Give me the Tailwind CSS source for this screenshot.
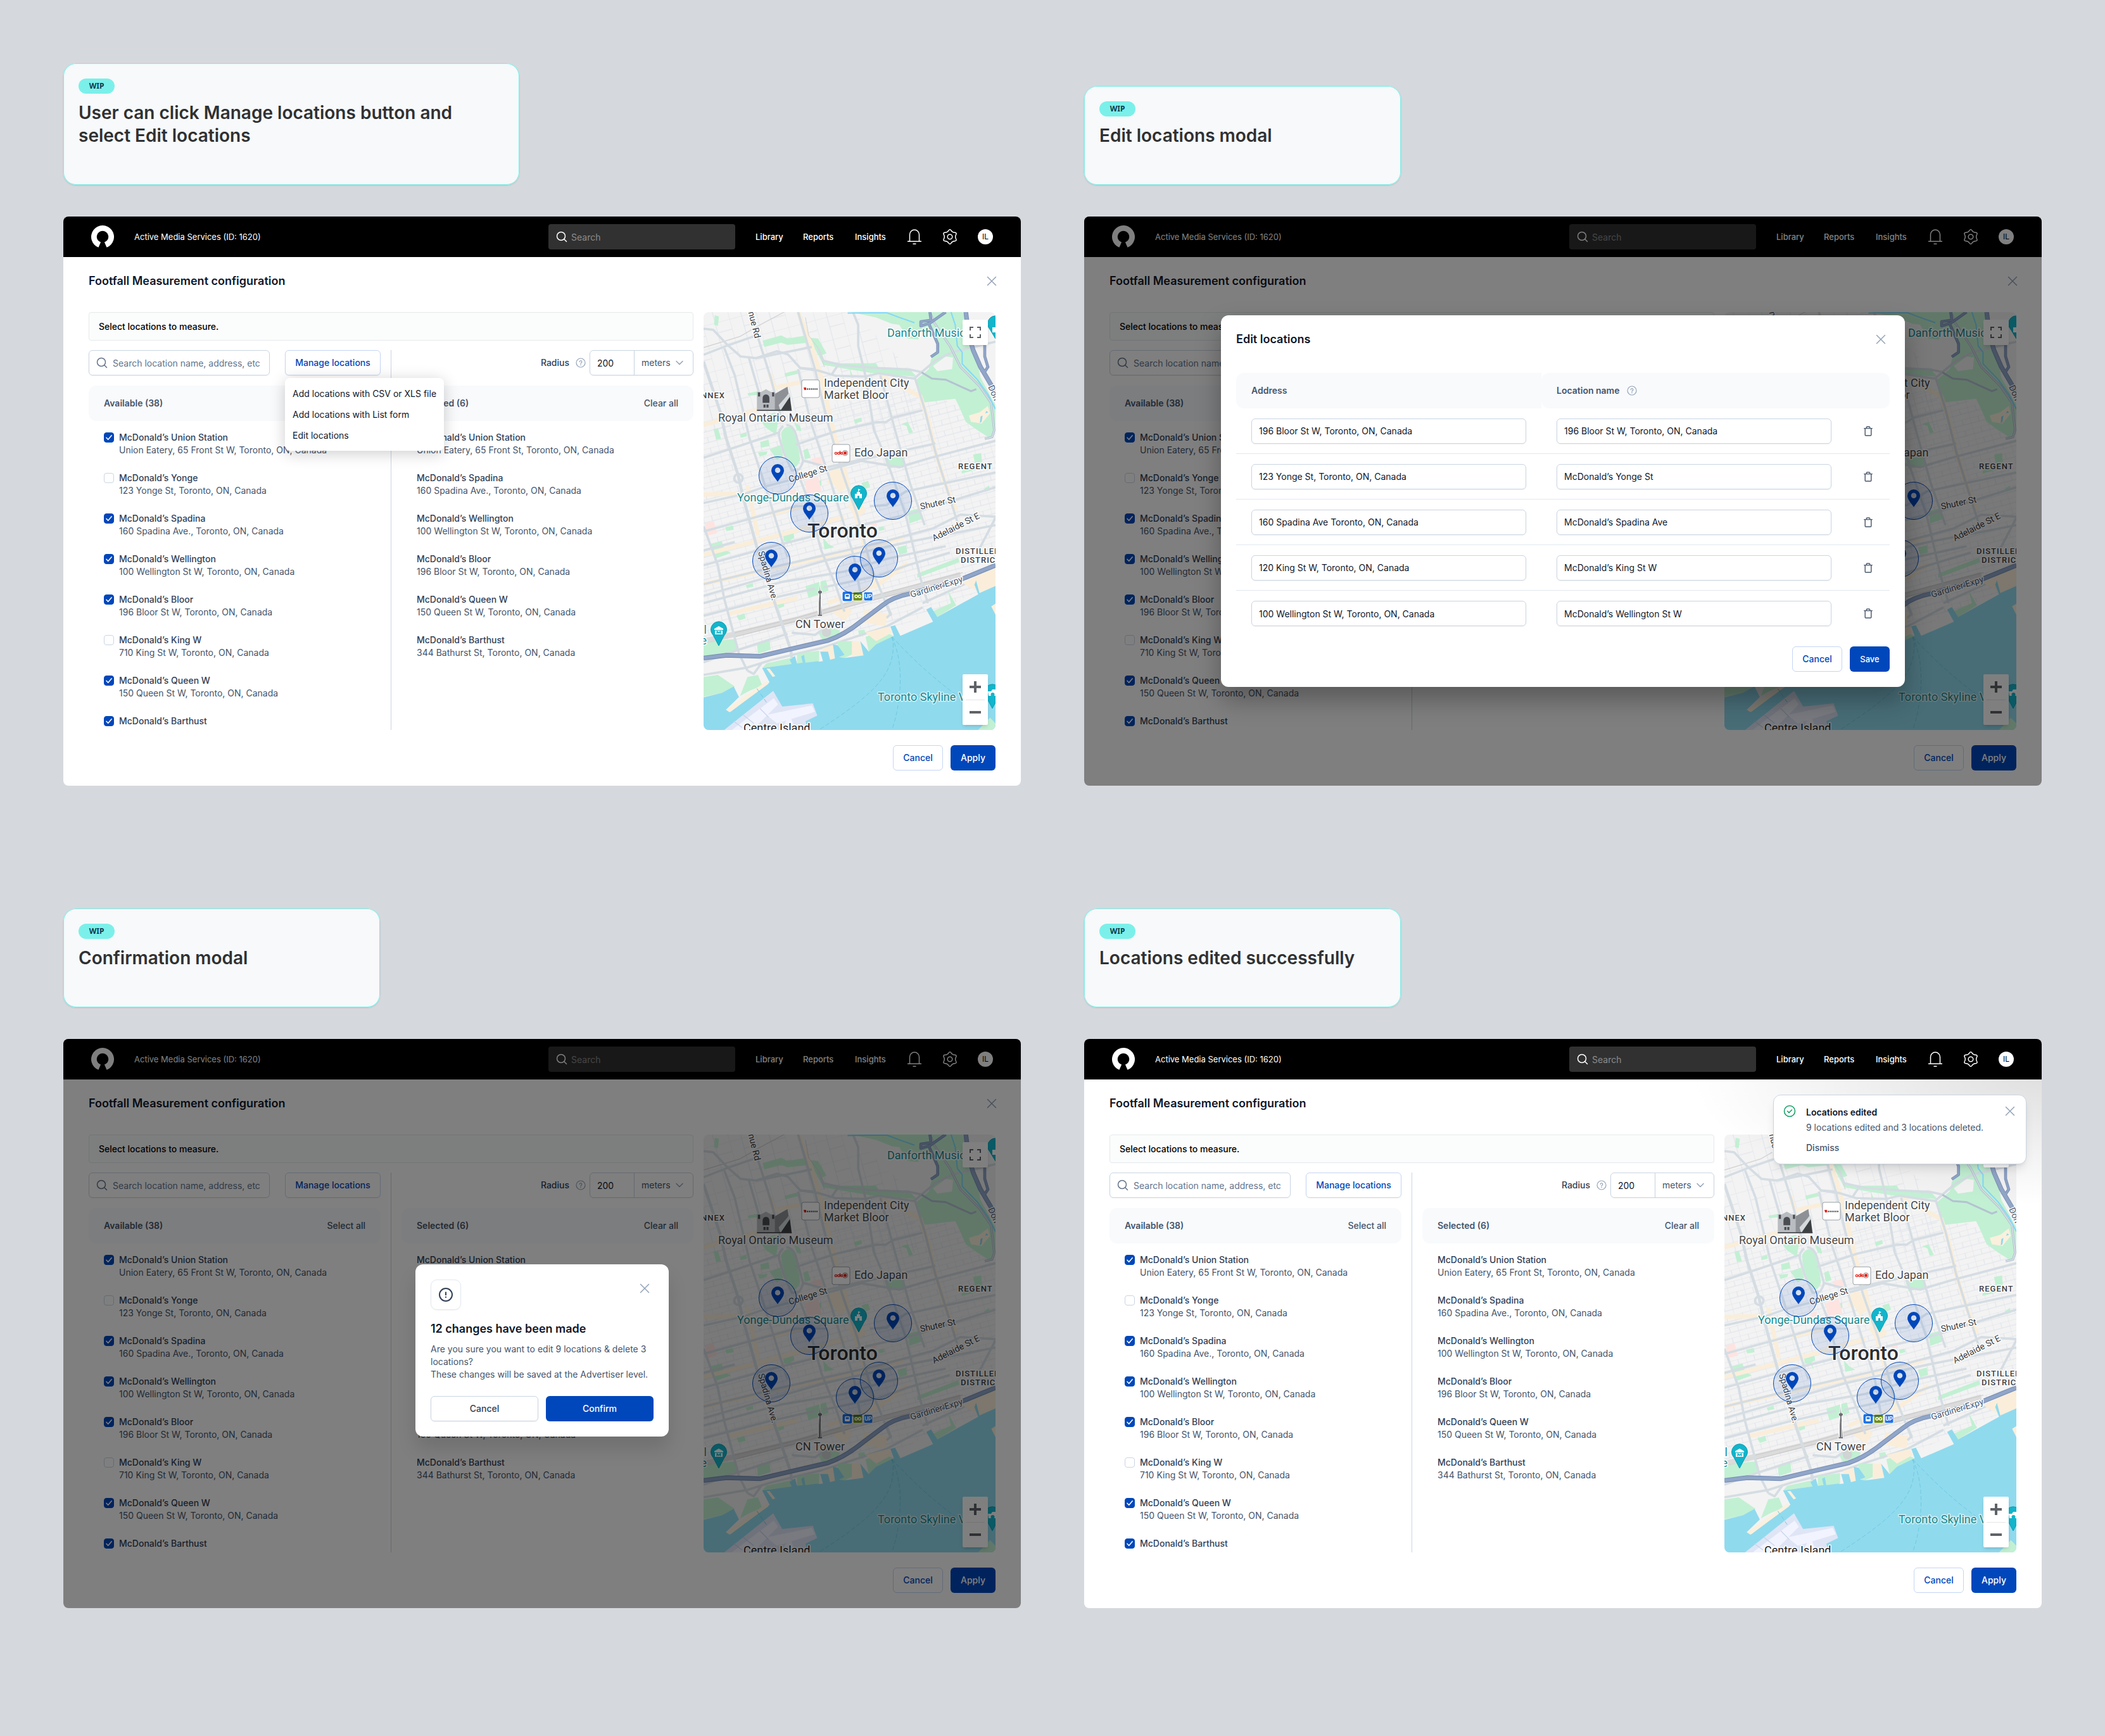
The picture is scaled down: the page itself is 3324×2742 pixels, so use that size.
<!DOCTYPE html>
<html lang="en">
<head>
<meta charset="utf-8">
<title>Footfall Measurement – edit locations flow</title>
<script src="https://cdn.jsdelivr.net/npm/@tailwindcss/browser@4"></script>
</head>
<body class="bg-[#d5d9de] font-['Inter',sans-serif] text-sm leading-5 text-slate-900">
<main id="board" class="grid grid-cols-2 items-end gap-x-[100px] gap-y-[194px] px-[100px] pt-[100px] pb-[200px]"></main>

<!-- Map artwork, shared by every screen -->
<template id="map">
  <div class="relative shrink grow basis-0 overflow-hidden rounded-lg bg-[#f3f3f3]">
    <svg class="absolute inset-0 h-full w-full" viewBox="32 39 1384 1983" preserveAspectRatio="xMidYMid slice" fill="none" aria-hidden="true">
      <defs>
        <pattern id="gridA" width="78" height="52" patternUnits="userSpaceOnUse" patternTransform="rotate(-15)"><path d="M0 0H78M0 0V52M40 0V26M0 26H78" stroke="#dde2ea" stroke-width="3"/></pattern>
        <pattern id="gridB" width="130" height="110" patternUnits="userSpaceOnUse" patternTransform="rotate(-15)"><path d="M0 0H130M0 0V110M60 0V110M60 50H130" stroke="#dde2ea" stroke-width="3"/></pattern>
      </defs>
      <path fill="url(#gridB)" d="M32 39H740L1040 340V600H32Z"/>
      <path fill="url(#gridA)" d="M32 600L1040 400L1416 560V1330L900 1560L32 1700Z"/>
      <g fill="#c2f0d3">
        <path d="M730 39H1260L1310 180L1345 350L1416 480V600L1395 640L1330 600L1275 560L1240 480L1225 450L1075 468L1040 360L1100 310L1110 265L1150 215L1140 170L1070 115L1050 170L1000 165L960 100L925 95L850 65Z"/>
        <path d="M520 160L575 165L615 235L590 245L600 270L680 282L850 282L860 300L1010 310L1040 345L870 335L700 308L600 290L560 215L530 180Z"/>
        <path d="M312 175L400 150L430 165L520 150L530 185L430 195L400 185L320 205Z"/>
        <path d="M85 55L105 60L100 105L82 100ZM415 330L475 315L480 332L420 347ZM745 550L780 540L783 558L750 568ZM970 570L1000 560L1025 610L1005 615L995 580ZM400 610Q425 570 455 590Q485 680 490 740Q470 790 455 770Q400 700 400 610ZM290 540L370 515L385 560L375 620L330 590ZM80 595L100 590L115 640L92 645ZM205 620L235 610L238 628L208 636ZM240 425L290 415L290 432L245 436ZM460 560L490 580L495 605L475 600ZM300 655L340 645L345 675L305 682ZM290 705L335 700L330 715L298 725ZM345 690L395 670L410 720L380 740ZM505 695L525 685L540 730L512 738ZM890 735L980 725L990 765L905 782ZM780 850L812 840L822 870L795 880ZM1000 985L1055 970L1070 1020L1008 1042ZM565 842L590 838L592 862L570 868ZM725 305L742 352L730 350ZM1310 715L1348 708L1355 780L1255 805L1260 780L1320 765ZM1360 880L1385 862L1390 885L1365 892ZM135 1060L172 1052L175 1072L140 1078ZM860 1060L885 1055L890 1072L865 1078Z"/>
        <path d="M65 1140L118 1125L130 1165L162 1182L85 1210ZM410 1092L458 1080L462 1110L445 1120L455 1155L440 1128L412 1125ZM598 1110L625 1140L652 1155L605 1165ZM950 1155L992 1145L998 1180L960 1190ZM515 1340L612 1310L625 1360L530 1395ZM380 1420L410 1410L415 1435L388 1445ZM188 1480L225 1468L232 1492L200 1502ZM232 1335L265 1325L268 1342L238 1348ZM1045 1280L1240 1205L1245 1225L1045 1300ZM1080 1355L1115 1340L1120 1365L1085 1370ZM32 1605L180 1590L190 1645L32 1675ZM285 1610L345 1595L350 1640L290 1660ZM575 1560L620 1530L680 1550L660 1580L600 1600ZM765 1550L795 1545L800 1570L770 1580Z"/>
      </g>
      <g fill="#f3f3f3"><path d="M1120 295L1180 250L1215 255L1210 310L1140 320Z"/></g>
      <path fill="#faf0dd" d="M1290 530L1340 515L1380 485L1390 520L1350 568L1300 560Z"/>
      <path fill="#8ed9ee" d="M1345 535L1355 530L1350 560L1342 565ZM1372 508L1382 515L1368 520Z"/>
      <g stroke="#faeeda" stroke-width="20">
        <path d="M480 39L545 200L590 350L660 650L700 780L730 920L790 1130L850 1350M870 340L1060 440L1100 560L1130 700L1180 860L1230 980M32 575L230 520L300 500M360 400L500 370M345 330L370 410M32 905L210 900M240 860L290 1100M32 1190L400 1095L700 1010M620 850L700 800M32 1330L560 1210L980 1110M150 1470L480 1395M620 1420L860 1330L1000 1230M350 1000L500 960"/>
        <path stroke-width="60" d="M640 790L700 880M740 940L780 1000M660 1440L720 1480M790 1480L900 1500"/>
      </g>
      <path fill="#fde4e1" d="M512 840L575 818L592 890L520 900ZM40 1040L80 1030L96 1088L48 1100ZM545 735L590 725L598 758L552 768ZM440 885L470 878L472 900L445 905ZM822 1035L850 1028L855 1050L828 1055Z"/>
      <g stroke="#d3d3d3" stroke-width="4"><path d="M32 208L205 155L300 100L415 39"/><path stroke="#d6d6d6" stroke-width="26" opacity=".8" d="M32 1600L220 1558L480 1495L740 1420L1010 1350L1250 1285"/><path stroke="#c8c8c8" stroke-width="3" d="M180 1560L480 1488L740 1412L1010 1340L1260 1275M180 1580L480 1502L740 1430L1010 1360"/><path stroke-width="3" d="M515 65L530 150L575 210L605 300"/></g>
      <g stroke="#d5dde3" stroke-width="11" stroke-linejoin="round">
        <path d="M32 118L78 124L140 190L208 250L280 258L380 225L432 240L490 305L580 318L660 342L800 345L860 330L1030 355L1130 270L1210 230L1416 180"/>
        <path d="M32 242L140 200L290 148M280 258L545 205M490 305L560 310M575 210L600 270L690 292L860 305L1010 312L1070 325M640 335L670 290"/>
        <path d="M32 730L210 672L390 610M470 668L660 605L850 562L895 562L930 540L1070 505M32 945L225 902L330 865L600 795L780 745L960 775L1110 730L1416 650M500 742L620 775L1120 665L1130 660M32 1170L180 1130M32 1080L215 1030L470 960L620 960M820 960L900 955L990 890L1416 800M32 1240L380 1145L640 1080L1000 1000L1416 870M32 1330L400 1240L860 1135L1120 1065L1250 1000L1416 1010M32 1385L600 1220L1000 1130L1416 1050M32 1420L400 1320L700 1270L900 1210L1180 1150M600 1345L860 1290L1000 1240L1200 1180M32 1480L340 1400L560 1350M450 1560L560 1570L620 1530M1070 1420L1290 1320L1416 1230"/>
        <path stroke-width="14" d="M32 275L110 510L140 640L195 810L220 920L300 1210L370 1420L445 1640L450 1680"/>
        <path d="M130 210L180 340L250 640L310 820L400 1110L430 1200M245 250L300 440M285 145L350 350L405 560M470 780L520 910L590 1170L660 1340L700 1460M480 310L540 560L640 860L745 1200L780 1400M480 39L560 310L620 560L690 800L760 1000L830 1260L880 1380L920 1480"/>
        <path d="M740 39L765 100L765 200L800 345L840 600L900 740L990 1000L1060 1300L1095 1420M870 340L940 600L1010 850L1080 1050M1035 355L1080 500L1130 700L1180 860L1240 1050M32 1055L100 1240L130 1400L200 1660L240 1740"/>
        <path d="M410 580Q385 600 390 630L410 700L450 790L485 785Q510 750 500 730L470 620Q455 575 425 575M32 1760L240 1725L350 1690L600 1630L900 1530L1070 1440M240 1740L270 1755L310 1700M32 1700L200 1640L430 1565M900 1430L920 1470L900 1490M1416 1015L1330 1180"/>
        <circle cx="197" cy="828" r="20"/>
      </g>
      <path stroke="#aebcd0" stroke-width="11" d="M1105 39L1125 90L1200 200L1250 300L1340 390L1395 470L1410 600L1400 632L1365 640"/>
      <path stroke="#d5dde3" stroke-width="6" d="M1105 39L1125 90L1200 200L1250 300L1340 390L1395 470L1410 600L1400 632L1365 640"/>
      <path stroke="#b4c2d2" stroke-width="9" d="M1065 325L1115 355L1180 360L1300 415L1325 405"/>
      <path stroke="#83d8f8" stroke-width="6" d="M715 44L900 42L960 65L1032 90M1205 39L1225 100L1235 200L1258 230L1258 285L1330 360L1380 430L1416 500"/>
      <g stroke="#7f95bb" stroke-width="14" stroke-linejoin="round"><path d="M1180 39L1105 92L1062 105L1062 85L1110 78L1105 39M1100 95L1142 190L1142 230L1110 252M1365 195L1365 250L1380 300L1365 322L1345 315"/><path stroke-width="22" d="M1275 39L1290 150L1310 220L1345 300L1416 420"/></g>
      <g stroke="#91a6c8" stroke-width="8"><path d="M1180 39L1105 92L1062 105L1062 85L1110 78L1105 39M1100 95L1142 190L1142 230L1110 252M1365 195L1365 250L1380 300L1365 322L1345 315"/><path stroke-width="15" d="M1275 39L1290 150L1310 220L1345 300L1416 420"/></g>
      <g transform="translate(0 960)">
        <path fill="#c2f0d3" d="M30 810L100 800L180 855L120 885L30 905ZM240 810L290 800L310 850L250 875L205 900ZM330 745L445 720L450 748L310 768ZM475 700L580 685L580 740L475 745ZM665 640L740 640L765 690L700 720L680 715ZM1115 500L1140 525L1230 470L1190 400L1205 460ZM800 620L880 590L932 615L815 690Z"/>
        <path fill="#faeeda" d="M595 675L655 655L660 722L598 735ZM735 640L775 640L790 708L735 712ZM1260 365L1416 280V380L1340 410ZM800 600L910 570L925 600L850 640Z"/>
        <path fill="#90daee" d="M1416 378L1340 412L1324 352L1316 372L1334 418L1140 525L1110 478L1088 490L1120 548L965 615L940 565L918 570L934 615L850 655L815 690L775 640L790 708L700 720L675 715L700 705L668 660L645 655L655 722L632 728L622 690L585 690L598 735L575 738L575 735L515 742L508 705L495 712L502 742L475 745L465 710L440 728L450 748L310 768L345 835L160 975L138 965L200 905L175 855L120 885L30 907V1065H1416Z"/>
        <path fill="#faf0dd" d="M345 770L372 805L360 810L330 770ZM138 965L330 830L340 842L155 977ZM1396 475L1416 462V515Z"/>
        <path fill="#dfe5f5" d="M125 1065L362 876L405 950L550 935L571 993L515 1020L530 1065Z"/>
        <path fill="#f1f4fe" d="M165 1062L365 910L385 940L260 1065ZM330 990L545 945L560 975L380 1030ZM400 1060L440 990L470 1062Z"/>
        <path stroke="#c9d3ea" stroke-width="4" d="M175 1020L215 1050M220 990L270 1030M300 960L340 1000"/>
        <path fill="#c2f0d3" d="M1330 1065L1390 1003L1416 1030V1065Z"/>
        <path stroke="#6ccadd" stroke-width="3" stroke-dasharray="20 10" d="M928 620C950 780 860 880 580 1060M922 620C990 740 965 950 925 1060M925 620C1000 700 1100 800 1230 895M285 865L330 930"/>
        <path stroke="#768eb8" stroke-width="22" d="M32 720L140 707L300 712L460 674L620 637Q700 610 780 545L880 470Q930 430 1010 415L1240 352L1416 280"/>
        <path stroke="#91a6c8" stroke-width="15" d="M32 720L140 707L300 712L460 674L620 637Q700 610 780 545L880 470Q930 430 1010 415L1240 352L1416 280"/>
        <g fill="#6d6f73" stroke="#fff" stroke-width="3"><path d="M583 355L587 400L595 402V410L588 416L596 522H572L580 416L573 410V402L581 400Z"/></g>
        <path stroke="#f3f3f3" stroke-width="4" d="M577 440V515M589 440V515"/>
        <circle cx="615" cy="598" r="22" fill="#d0d4d4"/>
      </g>
      <!-- museum -->
      <g><path fill="#8d9094" d="M365 430L430 393L435 425L388 507H345Z"/><path fill="#3c4043" d="M388 507L440 430L450 507Z"/><path fill="#d5dadd" d="M388 480L440 422L442 440L396 507Z"/><path fill="#b9bdc1" d="M285 418H305L328 405L350 418H370V507H285Z"/><path fill="#4a4d51" d="M312 450Q312 430 328 430Q344 430 344 450V470H312ZM290 420H300V440H290ZM357 420H367V440H357ZM316 478H326V492H316ZM330 478H340V492H330ZM285 503H450V508H285Z"/></g>
    </svg>
    <svg class="absolute inset-0 h-full w-full font-['Roboto',sans-serif]" fill="none">
      <g stroke="#fff" stroke-width="3" stroke-linejoin="round" fill="#45484b" font-size="18">
        <g>
          <text class="[paint-order:stroke]" x="190" y="118">Independent City</text>
          <text class="[paint-order:stroke]" x="190" y="137">Market Bloor</text>
          <text class="[paint-order:stroke]" x="23" y="173">Royal Ontario Museum</text>
          <text class="[paint-order:stroke]" x="238" y="228">Edo Japan</text>
          <text class="[paint-order:stroke]" x="145" y="499">CN Tower</text>
          <text class="[paint-order:stroke]" x="63" y="663" fill="#202124">Centre Island</text>
        </g>
        <g fill="#16898d">
          <text class="[paint-order:stroke]" x="290" y="39">Danforth Music</text>
          <text class="[paint-order:stroke]" x="53" y="299">Yonge-Dundas Square</text>
          <text class="[paint-order:stroke]" x="275" y="614" stroke="#d8f0f6">Toronto Skyline V</text>
          <text class="[paint-order:stroke]" x="5" y="508" text-anchor="end">al</text>
          <text class="[paint-order:stroke]" x="5" y="525" text-anchor="end">e</text>
        </g>
        <g font-size="13" font-weight="500" letter-spacing="1" fill="#3c4043">
          <text class="[paint-order:stroke]" x="34" y="136" text-anchor="end">ANNEX</text>
          <text class="[paint-order:stroke]" x="402" y="248">REGENT</text>
          <text class="[paint-order:stroke]" x="398" y="382">DISTILLERY</text>
          <text class="[paint-order:stroke]" x="406" y="396">DISTRICT</text>
        </g>
        <g font-size="14" fill="#3c4043">
          <text class="[paint-order:stroke]" transform="translate(65 -22) rotate(76)">Avenue Rd</text>
          <text class="[paint-order:stroke]" transform="translate(136 269) rotate(-17)">College St</text>
          <text class="[paint-order:stroke]" transform="translate(343 312) rotate(-12)">Shuter St</text>
          <text class="[paint-order:stroke]" transform="translate(364 362) rotate(-27)">Adelaide St E</text>
          <text class="[paint-order:stroke]" transform="translate(328 451) rotate(-17)" fill="#4a5a72">Gardiner Expy</text>
          <text class="[paint-order:stroke]" transform="translate(86 379) rotate(74)">Spadina Ave.</text>
          <text class="[paint-order:stroke]" transform="translate(449 118) rotate(66)" fill="#4a5a72">Don Valley</text>
        </g>
        <text class="[paint-order:stroke]" x="164" y="356" font-size="32" font-weight="500" fill="#2b2e31">Toronto</text>
      </g>
      <!-- shops -->
      <g><rect x="155" y="107" width="28" height="28" rx="3" fill="#fff" stroke="#9aa0a6"/><path fill="#e2231a" d="M158 119h4v4h-3z"/><path stroke="#3c4043" stroke-width="2" stroke-dasharray="2 1" d="M163 121.500h17"/>
      <rect x="203" y="209" width="28" height="28" rx="3" fill="#fff" stroke="#9aa0a6"/><circle cx="223.500" cy="222.500" r="4" stroke="#777"/><circle cx="223.500" cy="222.500" r="2.500" fill="#e2231a"/><g stroke="#e2231a" stroke-width="1.300"><circle cx="209" cy="223" r="1.700"/><circle cx="213.500" cy="223" r="1.700"/><path d="M215.500 219v5.500"/><circle cx="218" cy="223" r="1.500"/></g></g>
      <!-- transit -->
      <g><rect x="219" y="441" width="16" height="16" rx="3" fill="#1a73e8" stroke="#fff"/><rect x="223" y="445" width="8" height="8" rx="1.500" fill="#fff"/><path fill="#1a73e8" d="M224.500 446.500h5v3h-5z"/><rect x="236" y="442" width="15" height="14" rx="2" fill="#6b8e12" stroke="#fff"/><circle cx="241" cy="449" r="2" stroke="#fff" stroke-width="1.500"/><circle cx="246.500" cy="449" r="2" stroke="#fff" stroke-width="1.500"/><rect x="253" y="442" width="14" height="14" rx="2" fill="#1a73e8" stroke="#fff"/><text x="260" y="452" text-anchor="middle" font-size="9" font-weight="700" fill="#fff">UP</text></g>
      <!-- sights -->
      <g fill="#12b5cb" stroke="#0b9db1">
        <path d="M245 312L236 295A12.500 12.500 0 1 1 254 295Z"/><path d="M24 527L15 510A12.500 12.500 0 1 1 33 510Z"/><path d="M461 42L452 27A12.500 12.500 0 1 1 470 27Z"/><path d="M456 626L447 609A12.500 12.500 0 1 1 465 609Z"/>
        <g fill="#fff" stroke="none"><path d="M239 294v-7h3v-3h2v-5l4 1.500-3 1.500v2h2v3h3v7h-4v-4h-3v4z"/><path d="M17 500l7-4 7 4v2H17zM18 503h12v6H18z"/><path d="M456 24h8v8h-8zM449 599h5l2-3h6v10h-12z"/></g>
        <path fill="#12b5cb" stroke="none" d="M20.500 508v-4.500h1.500l2 2 2-2h1.500v4.500h-1.500v-2l-2 2-2-2v2z"/><circle cx="456.500" cy="604" r="3" stroke="none"/>
      </g>
      <!-- measured locations -->
      <g id="pins"></g>
    </svg>
    <button type="button" aria-label="Full screen" class="absolute top-3 right-3 flex size-10 items-center justify-center rounded-xs bg-white shadow-md"><svg width="18" height="18" fill="none" stroke="#5f6368" stroke-width="2"><path d="M1 6V1h5M12 1h5v5M17 12v5h-5M6 17H1v-5"/></svg></button>
    <div class="absolute right-3 bottom-2 flex w-10 flex-col items-center rounded-xs bg-white shadow-md">
      <button type="button" aria-label="Zoom in" class="flex size-10 items-center justify-center"><svg width="18" height="18" fill="none" stroke="#5f6368" stroke-width="4"><path d="M0 9h18M9 0v18"/></svg></button>
      <div class="absolute top-10 h-px w-[30px] bg-[#e6e6e6]"></div>
      <button type="button" aria-label="Zoom out" class="flex size-10 items-center justify-center"><svg width="18" height="18" fill="none" stroke="#5f6368" stroke-width="4"><path d="M0 9h18"/></svg></button>
    </div>
  </div>
</template>

<script>
const cross = '<svg class="block" width="16" height="16" fill="none" stroke="#94a3b8" stroke-width="1.500" stroke-linecap="round"><path d="M1.500 1.500l13 13M14.500 1.500l-13 13"/></svg>';
const help = '<svg class="block shrink-0" width="16" height="16" viewBox="0 0 16 16" fill="none" stroke="#94a3b8" stroke-width="1.200" stroke-linecap="round" role="img" aria-label="Help"><circle cx="8" cy="8" r="7"/><path d="M6.200 6.600a1.800 1.800 0 1 1 2.700 1.500c-.6.300-.9.600-.9 1.200"/><circle cx="8" cy="11.300" r=".3"/></svg>';
const lens = c => `<svg class="absolute top-1/2 left-3 -translate-y-1/2" width="18" height="18" fill="none" stroke="${c}" stroke-width="1.500" stroke-linecap="round"><circle cx="8" cy="8" r="6.500"/><path d="M12.800 12.800l3.700 3.700"/></svg>`;

const pinSpots = [[117,258],[167,318],[299,298],[107,393],[277,389],[239,415]];
const pins = pinSpots.map(([x,y]) => `<g transform="translate(${x} ${y})"><circle r="29.500" fill="#0047bb" fill-opacity=".1" stroke="#0047bb"/><path fill="#0047bb" fill-rule="evenodd" d="M0 10C-3 5-10-2-10-8A10 10 0 0 1 10-8C10-2 3 5 0 10ZM0-12.500a4.300 4.300 0 1 0 0 8.600a4.300 4.300 0 0 0 0-8.600Z"/></g>`).join('');

const available = [
  ['McDonald’s Union Station','Union Eatery, 65 Front St W, Toronto, ON, Canada',1],
  ['McDonald’s Yonge','123 Yonge St, Toronto, ON, Canada',0],
  ['McDonald’s Spadina','160 Spadina Ave., Toronto, ON, Canada',1],
  ['McDonald’s Wellington','100 Wellington St W, Toronto, ON, Canada',1],
  ['McDonald’s Bloor','196 Bloor St W, Toronto, ON, Canada',1],
  ['McDonald’s King W','710 King St W, Toronto, ON, Canada',0],
  ['McDonald’s Queen W','150 Queen St W, Toronto, ON, Canada',1],
  ['McDonald’s Barthust','',1]];
const selected = [
  ['McDonald’s Union Station','Union Eatery, 65 Front St, Toronto, ON, Canada'],
  ['McDonald’s Spadina','160 Spadina Ave., Toronto, ON, Canada'],
  ['McDonald’s Wellington','100 Wellington St W, Toronto, ON, Canada'],
  ['McDonald’s Bloor','196 Bloor St W, Toronto, ON, Canada'],
  ['McDonald’s Queen W','150 Queen St W, Toronto, ON, Canada'],
  ['McDonald’s Barthust','344 Bathurst St, Toronto, ON, Canada']];

const place = (n, a) => `<span class="block font-medium text-slate-700">${n}</span>${a ? `<span class="block text-slate-600">${a}</span>` : ''}`;
const note = (title, w) => `<header class="${w} rounded-[20px] bg-[#f7f9fa] px-6 pt-6 pb-[60px] shadow-sm ring-1 ring-[#7bf0ea] ring-inset">
  <span class="flex h-6 w-[57px] items-center justify-center rounded-full bg-[#7bf0ea] font-['Noto_Sans',sans-serif] text-xs font-bold text-[#0b3b4f]">WIP</span>
  <h1 class="mt-3 text-[28px] leading-9 font-semibold text-[#2f3133]">${title}</h1></header>`;

const screen = (extra, menu) => `<section class="relative flex flex-col overflow-hidden rounded-lg bg-white">
  <nav class="flex h-16 items-center gap-8 bg-black px-11 text-white">
    <svg width="36" height="36" fill="#fff" role="img" aria-label="Home"><path d="M11.500 34.800A18 18 0 1 1 24.500 34.800L20.900 26.600A9.200 9.200 0 1 0 15.100 26.600Z"/></svg>
    <span class="text-[13px]">Active Media Services (ID: 1620)</span>
    <label class="relative ml-auto block w-[295px]">${lens('#fff')}<input type="search" aria-label="Search" placeholder="Search" class="block h-10 w-full rounded-sm bg-[#313131] pl-9 text-sm placeholder:text-[#8c8c8c]"></label>
    <a href="#library" class="w-[43px] text-[13px] font-medium">Library</a>
    <a href="#reports" class="w-[50px] text-[13px] font-medium">Reports</a>
    <a href="#insights" class="w-[50px] text-[13px] font-medium">Insights</a>
    <button type="button" aria-label="Notifications"><svg width="24" height="24" fill="none" stroke="#fff" stroke-width="1.500"><path d="M4.500 19V8.500a7.500 7.500 0 0 1 15 0V19M1 19.200h22M9.500 23.200h5"/></svg></button>
    <button type="button" aria-label="Settings"><svg width="24" height="24" fill="none" stroke="#fff" stroke-width="1.500"><path d="M10 2.100Q12-1 14 2.100Q15.900 5.200 19.600 5.350Q23.300 5.500 21.550 8.750Q19.800 12 21.550 15.250Q23.300 18.500 19.600 18.650Q15.900 18.800 14 21.900Q12 25 10 21.900Q8.100 18.800 4.400 18.650Q.7 18.500 2.450 15.250Q4.200 12 2.450 8.750Q.7 5.500 4.400 5.350Q8.100 5.200 10 2.100Z"/><circle cx="12" cy="12" r="3.800"/></svg></button>
    <button type="button" class="size-6 rounded-full bg-white text-xs text-black">IL</button>
  </nav>
  <div class="px-10 pt-6 pb-6">
    <div class="flex h-7 items-center justify-between">
      <h2 class="text-lg leading-7 font-semibold">Footfall Measurement configuration</h2>
      <button type="button" aria-label="Close" class="-mr-0.5">${cross}</button>
    </div>
    <div class="mt-[35px] flex gap-4">
      <div class="flex shrink grow-2 basis-[33px] flex-col">
        <p class="flex h-[45px] items-center rounded-sm border border-[#e5e9ec] bg-[#fbfcfc] px-[15px] font-medium text-black">Select locations to measure.</p>
        <div class="mt-[15px] flex grow gap-4">
          <div class="min-w-0 flex-1">
            <div class="flex h-10 gap-6">
              <label class="relative block flex-1">${lens('#64748b')}<input type="search" aria-label="Search locations" placeholder="Search location name, address, etc" class="block h-10 w-full rounded-md border border-slate-300 pl-[37px] text-sm shadow-xs placeholder:text-slate-500"></label>
              <div class="relative">
                <button type="button" class="block h-10 w-[151px] rounded-md border border-[#c5d6f5] font-medium text-[#0047bb] shadow-xs">Manage locations</button>${menu}
              </div>
            </div>
            <div class="mt-4 flex h-14 items-center justify-between rounded-xl bg-slate-50 px-6 text-slate-600"><h3 class="font-semibold">Available (38)</h3><button type="button" class="font-medium">Select all</button></div>
            <ul class="space-y-6 px-6 pt-4 pb-1">${available.map(([n,a,c]) => `<li><label class="flex gap-2"><span class="relative mt-0.5 block size-4 shrink-0"><input type="checkbox" ${c ? 'checked' : ''} class="peer block size-4 appearance-none rounded-sm border border-slate-300 checked:border-[#0047bb] checked:bg-[#0047bb]"><svg class="pointer-events-none absolute inset-0 hidden peer-checked:block" width="16" height="16" fill="none" stroke="#fff" stroke-width="1.600" stroke-linecap="round" stroke-linejoin="round"><path d="M4 8.300l2.700 2.900L12.200 4.800"/></svg></span><span>${place(n,a)}</span></label></li>`).join('')}</ul>
          </div>
          <div class="w-px bg-slate-300"></div>
          <div class="min-w-0 flex-1">
            <div class="flex h-10 items-center justify-end">
              <label class="flex items-center"><span class="mr-2.5 font-medium text-slate-700">Radius</span>${help}<input type="text" value="200" aria-label="Radius" class="ml-1.5 block h-10 w-[71px] rounded-l-md border border-slate-300 pl-[11px] text-slate-900 shadow-xs"></label>
              <div class="relative -ml-px"><select aria-label="Unit" class="block h-10 w-[94px] appearance-none rounded-r-md border border-slate-300 pl-[11px] text-slate-600 shadow-xs"><option>meters</option></select><svg class="pointer-events-none absolute top-4 right-4" width="12" height="8" fill="none" stroke="#94a3b8" stroke-width="1.500" stroke-linecap="round" stroke-linejoin="round"><path d="M1 1.500l5 5 5-5"/></svg></div>
            </div>
            <div class="mt-4 flex h-14 items-center justify-between rounded-xl bg-slate-50 px-6 text-slate-600"><h3 class="font-semibold">Selected (6)</h3><button type="button" class="font-medium">Clear all</button></div>
            <ul class="space-y-6 px-6 pt-4">${selected.map(([n,a]) => `<li>${place(n,a)}</li>`).join('')}</ul>
          </div>
        </div>
      </div>
      ${document.getElementById('map').innerHTML.replace('<g id="pins"></g>', `<g>${pins}</g>`)}
    </div>
    <div class="mt-6 flex justify-end gap-3">
      <button type="button" class="h-10 w-[79px] rounded-md border border-[#c5d6f5] font-medium text-[#0047bb]">Cancel</button>
      <button type="button" class="h-10 w-[71px] rounded-md bg-[#0047bb] font-medium text-white">Apply</button>
    </div>
  </div>${extra}</section>`;

const menu = `<ul role="menu" class="absolute top-11 left-0 z-10 w-[251px] rounded-lg bg-white px-3 py-2 shadow-[0_4px_24px_rgba(0,0,0,0.2)]">${['Add locations with CSV or XLS file','Add locations with List form','Edit locations'].map(t => `<li><button type="button" role="menuitem" class="flex h-[33px] w-full items-center whitespace-nowrap">${t}</button></li>`).join('')}</ul>`;

const edits = [
  ['196 Bloor St W, Toronto, ON, Canada','196 Bloor St W, Toronto, ON, Canada'],
  ['123 Yonge St, Toronto, ON, Canada','McDonald’s Yonge St'],
  ['160 Spadina Ave Toronto, ON, Canada','McDonald’s Spadina Ave'],
  ['120 King St W, Toronto, ON, Canada','McDonald’s King St W'],
  ['100 Wellington St W, Toronto, ON, Canada','McDonald’s Wellington St W']];
const field = (v, l) => `<input type="text" value="${v}" aria-label="${l}" class="block h-10 w-full rounded-md border border-slate-300 px-[11px] shadow-xs">`;
const editModal = `<div class="absolute inset-0 flex items-center justify-center bg-black/50"><div role="dialog" aria-label="Edit locations" class="w-[1080px] rounded-xl bg-white p-6 shadow-[0_20px_40px_rgba(0,0,0,0.3)]">
  <div class="flex items-center justify-between"><h2 class="text-lg leading-7 font-semibold">Edit locations</h2><button type="button" aria-label="Close" class="mr-1.5">${cross}</button></div>
  <table class="mt-[39px] w-full table-fixed border-separate border-spacing-0 text-left">
    <colgroup><col class="w-[482px]"><col class="w-[482px]"><col></colgroup>
    <thead><tr class="h-14 text-slate-600"><th class="rounded-l-xl bg-slate-50 px-6 font-semibold">Address</th><th class="rounded-l-xl bg-slate-50 px-6 font-semibold"><span class="flex items-center gap-3">Location name ${help}</span></th><th class="rounded-r-xl bg-slate-50"></th></tr></thead>
    <tbody>${edits.map(([a,n], i) => { const b = i < 4 ? 'border-b border-slate-200' : ''; return `<tr class="h-[72px]"><td class="${b} px-6">${field(a,'Address')}</td><td class="${b} px-6">${field(n,'Location name')}</td><td class="${b}"><button type="button" aria-label="Delete" class="mx-auto block"><svg width="16" height="16" fill="none" stroke="#475569" stroke-width="1.400" stroke-linejoin="round" stroke-linecap="round"><path d="M1.700 3.600h12.600M5.300 3.400V2q0-1 1-1h3.400q1 0 1 1v1.400M3.200 3.600v10.400q0 1 1 1h7.600q1 0 1-1V3.600"/></svg></button></td></tr>`; }).join('')}</tbody>
  </table>
  <div class="mt-4 flex justify-end gap-3"><button type="button" class="h-10 w-[79px] rounded-md border border-[#c5d6f5] font-medium text-[#0047bb]">Cancel</button><button type="button" class="h-10 w-[63px] rounded-md bg-[#0047bb] text-[13px] font-medium text-white">Save</button></div>
</div></div>`;

const confirmModal = `<div class="absolute inset-0 bg-black/50 pt-[356px]"><div role="dialog" aria-label="Confirm changes" class="mx-auto w-[400px] rounded-xl bg-white p-6 shadow-[0_20px_30px_rgba(0,0,0,0.12)]">
  <div class="flex items-start justify-between"><span class="flex size-12 items-center justify-center rounded-[10px] border border-slate-200 shadow-xs"><svg width="24" height="24" fill="none" stroke="#334155" stroke-width="2"><circle cx="12" cy="12" r="10"/><path d="M12 7.500v5.500M12 14.800v2"/></svg></span><button type="button" aria-label="Close" class="flex size-7 items-center justify-center">${cross}</button></div>
  <h2 class="mt-4 text-lg leading-7 font-semibold">12 changes have been made</h2>
  <p class="mt-2 text-slate-600">Are you sure you want to edit 9 locations &amp; delete 3<br>locations?<br>These changes will be saved at the Advertiser level.</p>
  <div class="mt-6 grid grid-cols-2 gap-3"><button type="button" class="h-10 rounded-md border border-slate-300 font-medium text-slate-700 shadow-xs">Cancel</button><button type="button" class="h-10 rounded-md bg-[#0047bb] font-medium text-white">Confirm</button></div>
</div></div>`;

const toast = `<div class="pointer-events-none absolute top-16 right-0 h-[200px] w-[560px] bg-[radial-gradient(ellipse_at_top_right,rgba(0,0,0,0.12),transparent_70%)]"></div>
<div role="status" class="absolute top-[88px] right-6 flex h-[110px] w-[400px] items-start rounded-xl border border-slate-300 bg-white pt-[15px] pr-[17px] pl-[15px] shadow-lg">
  <svg class="shrink-0" width="20" height="20" fill="none" stroke="#0d9f62" stroke-width="1.500" stroke-linecap="round" stroke-linejoin="round"><circle cx="10" cy="10" r="8.500"/><path d="M6.500 10l2.500 2.500 4.500-4.500"/></svg>
  <div class="ml-4 flex-1 pt-0.5"><h2 class="font-semibold">Locations edited</h2><p class="mt-1 text-slate-600">9 locations edited and 3 locations deleted.</p><button type="button" class="mt-3 block font-medium text-slate-600">Dismiss</button></div>
  <button type="button" aria-label="Close" class="flex h-5 items-center">${cross}</button>
</div>`;

const flow = [
  ['User can click Manage locations button and<br>select Edit locations','w-[720px]','',menu],
  ['Edit locations modal','w-[500px]',editModal,''],
  ['Confirmation modal','w-[500px]',confirmModal,''],
  ['Locations edited successfully','w-[500px]',toast,'']];
document.getElementById('board').innerHTML = flow.map(([t,w,x,m]) => `<article class="flex flex-col gap-[50px]">${note(t,w)}${screen(x,m)}</article>`).join('');
</script>
</body>
</html>
